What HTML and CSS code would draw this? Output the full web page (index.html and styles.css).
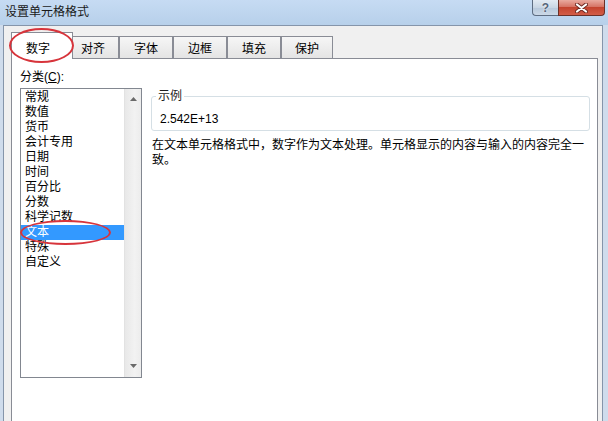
FILE: index.html
```html
<!DOCTYPE html>
<html lang="zh-CN">
<head>
<meta charset="utf-8">
<title>设置单元格格式</title>
<link rel="stylesheet" href="styles.css">
</head>
<body>
<div class="window">
  <div class="titlebar">
    <span class="title">设置单元格格式</span>
    <div class="caption-buttons">
      <div class="cap-btn help">?</div>
      <div class="cap-btn close">
        <svg width="13" height="10" viewBox="0 0 13 10">
          <path d="M2 1.5 L11 8.5 M11 1.5 L2 8.5" stroke="#6d2a22" stroke-width="4" stroke-linecap="round"/>
          <path d="M2 1.5 L11 8.5 M11 1.5 L2 8.5" stroke="#ffffff" stroke-width="2.2" stroke-linecap="round"/>
        </svg>
      </div>
    </div>
  </div>
  <div class="frame">
    <div class="client">
      <div class="tabs">
        <div class="tab active">数字</div>
        <div class="tab">对齐</div>
        <div class="tab">字体</div>
        <div class="tab">边框</div>
        <div class="tab">填充</div>
        <div class="tab">保护</div>
      </div>
      <div class="panel">
        <div class="category">
          <div class="label">分类(<u>C</u>):</div>
          <div class="listbox">
            <ul class="items">
              <li>常规</li>
              <li>数值</li>
              <li>货币</li>
              <li>会计专用</li>
              <li>日期</li>
              <li>时间</li>
              <li>百分比</li>
              <li>分数</li>
              <li>科学记数</li>
              <li class="selected">文本</li>
              <li>特殊</li>
              <li>自定义</li>
            </ul>
            <div class="scrollbar">
              <svg class="arrow" width="7" height="4" viewBox="0 0 7 4"><path d="M0 4 L3.5 0 L7 4 Z" fill="#6a6a6a"/></svg>
              <svg class="arrow" width="7" height="4" viewBox="0 0 7 4"><path d="M0 0 L7 0 L3.5 4 Z" fill="#6a6a6a"/></svg>
            </div>
          </div>
        </div>
        <div class="detail">
          <fieldset class="sample">
            <legend>示例</legend>
            <div class="value">2.542E+13</div>
          </fieldset>
          <p class="desc">在文本单元格格式中，数字作为文本处理。单元格显示的内容与输入的内容完全一致。</p>
        </div>
      </div>
    </div>
  </div>
  <div class="mark mark-tab"></div>
  <div class="mark mark-item"></div>
</div>
</body>
</html>
```
FILE: styles.css
```css
html, body {
  margin: 0;
  padding: 0;
  background: #ffffff;
}
body {
  font-family: "Liberation Sans", "Noto Sans CJK SC", sans-serif;
  font-size: 12px;
  color: #000;
}
.window {
  position: relative;
  width: 608px;
  height: 421px;
  overflow: hidden;
  display: flex;
  flex-direction: column;
  background: #cfdcec;
}
.titlebar {
  height: 25px;
  flex: none;
  display: flex;
  align-items: flex-start;
  padding: 0 3px 0 5px;
  background: linear-gradient(#c6dbf3, #b7d0ea);
}
.title {
  line-height: 25px;
  color: #1a1a1a;
}
.caption-buttons {
  margin-left: auto;
  display: flex;
}
.cap-btn {
  height: 16px;
  box-sizing: border-box;
  border: 1px solid #5e6d82;
  border-top: none;
  display: flex;
  align-items: center;
  justify-content: center;
}
.help {
  width: 26px;
  border-right: none;
  border-radius: 0 0 0 4px;
  background: linear-gradient(#e2eaf3, #c9d6e4 50%, #b7c8db 51%, #cbd8e7);
  color: #56657a;
  font-weight: bold;
  font-size: 12px;
  line-height: 14px;
  text-shadow: 0 0 2px #ffffff;
}
.close {
  width: 47px;
  border-color: #6b3028;
  border-radius: 0 0 4px 0;
  background: linear-gradient(#e9aa9f, #d67465 45%, #c4442f 50%, #d25d48);
}
.frame {
  flex: 1;
  min-height: 0;
  display: flex;
  padding: 0 5px 0 3px;
}
.client {
  flex: 1;
  min-height: 0;
  display: flex;
  flex-direction: column;
  background: #f0f0f0;
  border: 1px solid #8595aa;
  border-bottom: none;
  padding: 6px 4px 0 7px;
}
.tabs {
  flex: none;
  height: 26px;
  display: flex;
  align-items: flex-end;
}
.tab {
  position: relative;
  box-sizing: border-box;
  height: 22px;
  width: 54px;
  padding-top: 4px;
  line-height: 16px;
  text-align: center;
  border: 1px solid #898c95;
  border-bottom: none;
  background: linear-gradient(#f6f6f6, #e4e4e4);
  color: #000;
}
.tab:nth-child(2) {
  width: 52px;
  margin-left: -6px;
}
.tab:nth-child(6) {
  width: 52px;
}
.tab.active {
  z-index: 2;
  width: 62px;
  height: 27px;
  margin-bottom: -1px;
  padding-top: 8px;
  padding-right: 8px;
  background: #ffffff;
}
.panel {
  position: relative;
  z-index: 1;
  flex: 1;
  min-height: 0;
  display: flex;
  gap: 9px;
  background: #ffffff;
  border: 1px solid #898c95;
  border-bottom: none;
  padding: 10px 7px 0 8px;
}
.category {
  width: 122px;
  flex: none;
}
.label {
  line-height: 16px;
  margin-bottom: 3px;
}
.listbox {
  height: 290px;
  box-sizing: border-box;
  border: 1px solid #828790;
  display: flex;
}
.items {
  flex: 1;
  list-style: none;
  margin: 0;
  padding: 1px 0 0;
}
.items li {
  height: 15px;
  line-height: 15px;
  padding-left: 4px;
  white-space: nowrap;
}
.items li.selected {
  background: #3399ff;
  color: #ffffff;
}
.scrollbar {
  width: 16px;
  flex: none;
  display: flex;
  flex-direction: column;
  justify-content: space-between;
  align-items: center;
  padding: 8px 0 9px;
  background: linear-gradient(to right, #e8e8e8, #f2f2f2 60%, #ececec);
  border-left: 1px solid #e2e2e2;
}
.arrow {
  display: block;
}
.detail {
  flex: 1;
  min-width: 0;
  padding-top: 19px;
}
.sample {
  margin: 0;
  min-width: 0;
  border: 1px solid #d5dfe5;
  border-radius: 3px;
  padding: 0 0 3px 4px;
}
.sample legend {
  padding: 0 2px;
  line-height: 16px;
  color: #1e1e1e;
}
.value {
  margin-top: 7px;
  padding-left: 4px;
  line-height: 16px;
}
.desc {
  margin: 7px 0 0 1px;
  line-height: 15px;
}
.mark {
  position: absolute;
  z-index: 5;
  box-sizing: border-box;
  border: 2.5px solid #d7343b;
  border-radius: 50%;
}
.mark-tab {
  left: 9px;
  top: 28px;
  width: 65px;
  height: 35px;
}
.mark-item {
  left: 20px;
  top: 220px;
  width: 91px;
  height: 25px;
}
```
